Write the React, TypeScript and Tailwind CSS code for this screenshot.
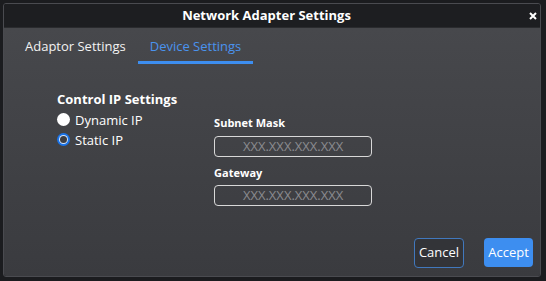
import React from "react";

const font = { fontFamily: '"Open Sans", "Noto Sans", sans-serif' };

const IpInput = () => (
  <input
    placeholder="XXX.XXX.XXX.XXX"
    className="w-[158px] h-[21px] rounded-[4px] border border-[#d8d8d8] bg-transparent text-center text-[13px] text-white placeholder:text-[#8a8b8f] outline-none"
  />
);

export default function App() {
  return (
    <div className="w-[546px] h-[281px] bg-[#1b1c1f] p-[3px] pr-[5px] pb-[4px]" style={font}>
      <div className="flex h-full flex-col rounded-[3px] border border-[#4a4b50] overflow-hidden">
        <div className="relative flex h-[24px] items-center justify-center bg-[#1d1e21] border-b border-[#2a2b2e] pr-[11px]">
          <span className="text-[13px] font-bold text-white">Network Adapter Settings</span>
          <svg className="absolute right-[3px] top-[8px]" width="8" height="8" viewBox="0 0 8 8">
            <path d="M1 1 L7 7 M7 1 L1 7" stroke="#fff" strokeWidth="2" />
          </svg>
        </div>
        <div className="flex flex-1 flex-col bg-gradient-to-b from-[#47484c] to-[#3a3b3f]">
          <div className="flex pl-[17px] pt-[9px] text-[13px]">
            <div className="px-[4px] pb-[7px] text-[#f2f2f2]">Adaptor Settings</div>
            <div className="ml-[8px] border-b-[3px] border-[#3d8ef0] px-[12px] pb-[4px] text-[#4a93ee]">
              Device Settings
            </div>
          </div>
          <div className="flex pl-[53px] pt-[26px]">
            <div className="flex flex-col">
              <div className="text-[13px] font-bold text-white leading-[18px]">Control IP Settings</div>
              <label className="mt-[3px] flex items-center gap-[5px] text-[13px] text-white leading-[18px]">
                <span className="h-[13px] w-[13px] rounded-full bg-white" />
                Dynamic IP
              </label>
              <label className="mt-[2px] flex items-center gap-[5px] text-[13px] text-white leading-[18px]">
                <span className="flex h-[13px] w-[13px] items-center justify-center rounded-full bg-[#1a73e8]">
                  <span className="h-[9px] w-[9px] rounded-full bg-[#d6e4f7] flex items-center justify-center">
                    <span className="h-[7px] w-[7px] rounded-full bg-[#3d3e42]" />
                  </span>
                </span>
                Static IP
              </label>
            </div>
            <div className="ml-[37px] mt-[25px] flex flex-col">
              <div className="text-[11px] font-bold text-white leading-[16px]">Subnet Mask</div>
              <div className="mt-[5px] flex"><IpInput /></div>
              <div className="mt-[8px] text-[11px] font-bold text-white leading-[16px]">Gateway</div>
              <div className="mt-[4px] flex"><IpInput /></div>
            </div>
          </div>
          <div className="mt-auto flex justify-end gap-[20px] pb-[8px] pr-[7px]">
            <button className="h-[30px] w-[50px] rounded-[4px] border border-[#4178bd] bg-[#333438] text-[13px] text-white">
              Cancel
            </button>
            <button className="h-[29px] w-[49px] rounded-[4px] bg-[#3d8ef0] text-[13px] text-white">
              Accept
            </button>
          </div>
        </div>
      </div>
    </div>
  );
}
